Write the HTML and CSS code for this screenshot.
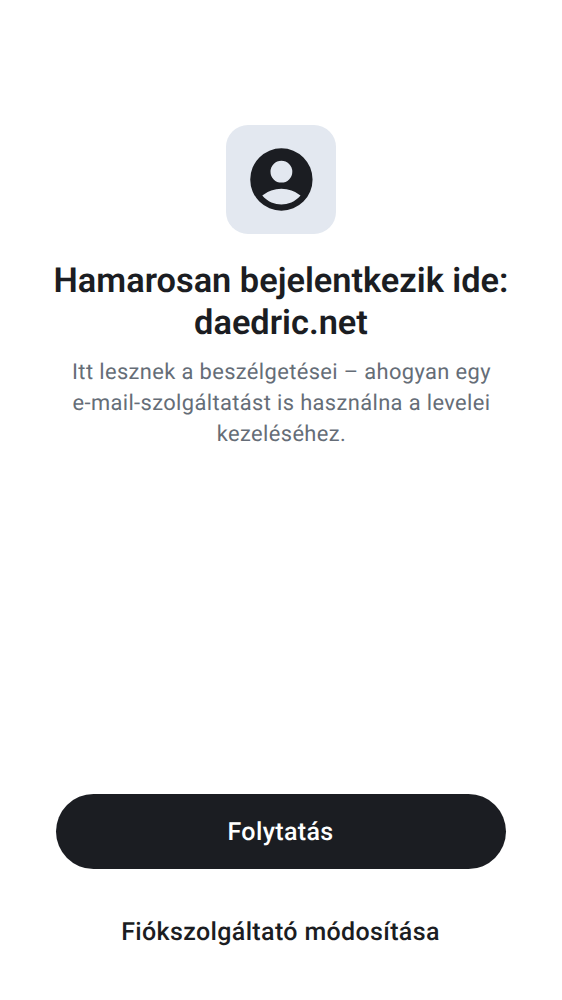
FILE: index.html
```html
<!DOCTYPE html>
<html lang="hu">
<head>
<meta charset="utf-8">
<title>daedric.net</title>
<link rel="stylesheet" href="styles.css">
</head>
<body>
<main class="screen">
  <header class="intro">
    <div class="badge">
      <svg class="badge-icon" viewBox="0 0 24 24" aria-hidden="true"><path fill-rule="evenodd" d="M12 2a10 10 0 1 0 0 20a10 10 0 0 0 0-20zM12 6a3.5 3.5 0 1 1 0 7a3.5 3.5 0 0 1 0-7zM12 20c-2.03 0-4.43-.82-6.14-2.88a9.95 9.95 0 0 1 12.28 0C16.43 19.18 14.03 20 12 20z"/></svg>
    </div>
    <h1 class="title">Hamarosan bejelentkezik ide:<br>daedric.net</h1>
    <p class="subtitle">Itt lesznek a beszélgetései – ahogyan egy<br>e-mail-szolgáltatást is használna a levelei<br>kezeléséhez.</p>
  </header>
  <footer class="actions">
    <button class="button primary">Folytatás</button>
    <button class="button text">Fiókszolgáltató módosítása</button>
  </footer>
</main>
</body>
</html>
```
FILE: styles.css
```css
* { box-sizing: border-box; }
body { margin: 0; background: #fff; color: #1b1d22; font-family: Roboto, sans-serif; text-rendering: geometricPrecision; }
.screen { height: 1000px; padding: 125px 28px 31px; display: flex; flex-direction: column; justify-content: space-between; }
.intro { display: flex; flex-direction: column; align-items: center; text-align: center; }
.badge { width: 109.4px; height: 109.4px; border-radius: 22px; background: #e3e8f0; display: flex; align-items: center; justify-content: center; }
.badge-icon { width: 74.8px; height: 75px; margin-left: .8px; fill: #1b1d22; }
.title { margin: 25.6px 0 0; font-size: 34.375px; line-height: 42.4px; font-weight: 600; white-space: nowrap; }
.subtitle { margin: 12px 0 0; padding-left: 1px; font-size: 21.875px; line-height: 31.3px; letter-spacing: .38px; color: #656d77; white-space: nowrap; }
.actions { display: flex; flex-direction: column; gap: 25px; padding: 0 28px; }
.button { height: 75px; border: 0; border-radius: 38px; padding: 2px 1px 0 0; font: 500 25px/37.5px Roboto, sans-serif; letter-spacing: .36px; text-rendering: geometricPrecision; }
.primary { background: #1b1d22; color: #fff; }
.text { background: transparent; color: #1b1d22; }
```
